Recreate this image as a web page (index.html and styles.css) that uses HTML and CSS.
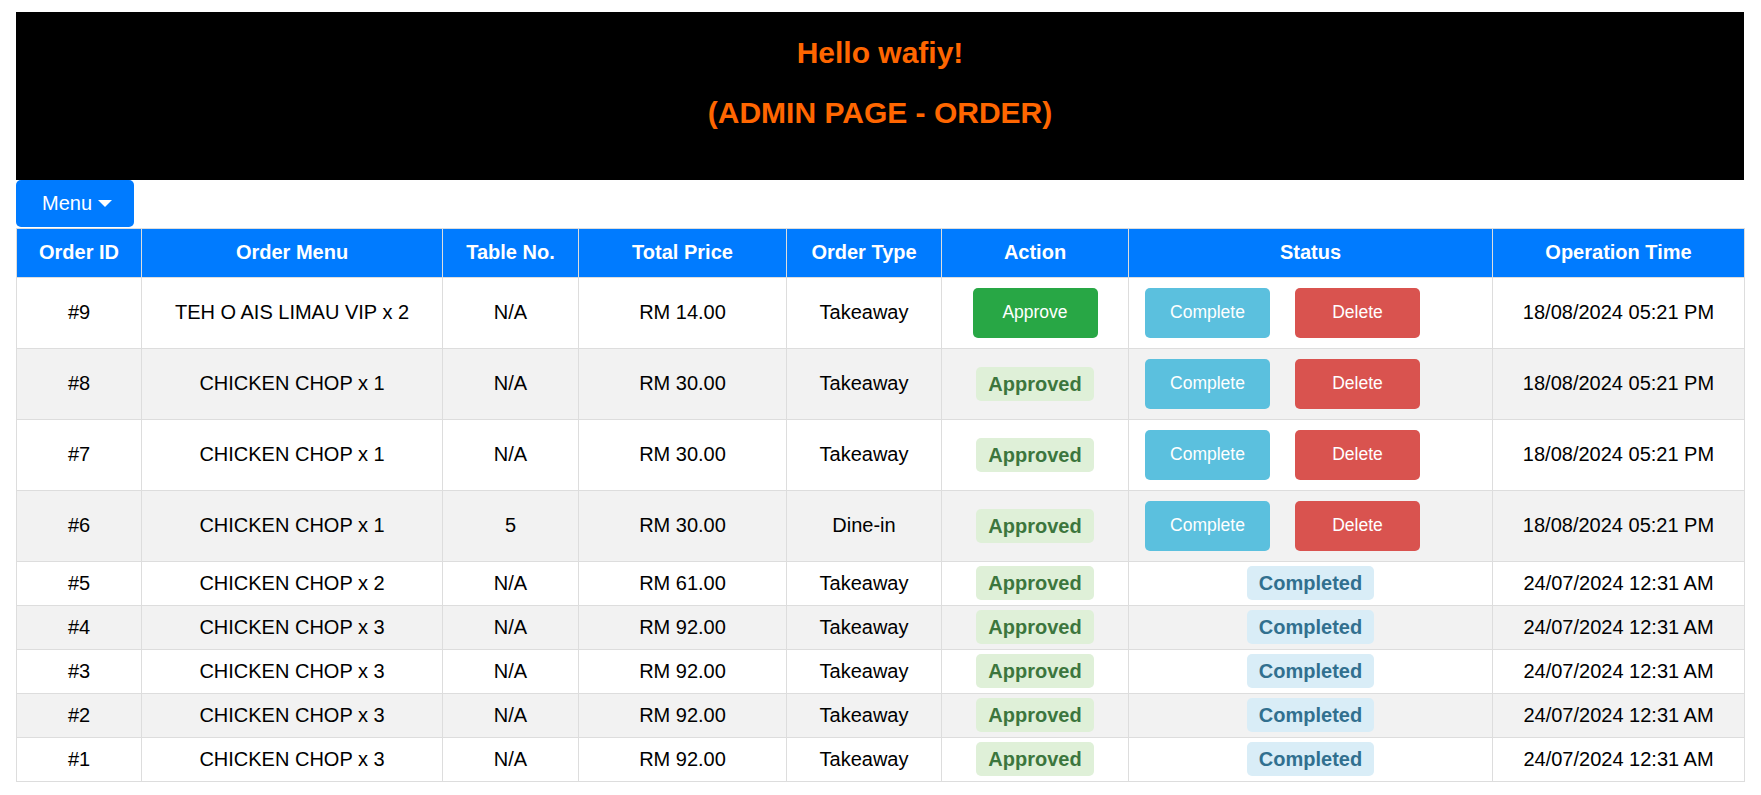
FILE: index.html
```html
<!DOCTYPE html>
<html lang="en">
<head>
<meta charset="utf-8">
<title>Admin Page - Order</title>
<link rel="stylesheet" href="styles.css">
</head>
<body>
<div class="page">
  <header class="banner">
    <div class="banner-line">Hello wafiy!</div>
    <div class="banner-line">(ADMIN PAGE - ORDER)</div>
  </header>
  <div class="menu-bar">
    <button class="menu-btn" type="button">Menu<svg class="caret" width="14" height="7" viewBox="0 0 14 7"><path d="M0 0 H14 L7 7 Z" fill="#fff"/></svg></button>
  </div>
  <table class="orders">
    <colgroup>
      <col class="c1"><col class="c2"><col class="c3"><col class="c4"><col class="c5"><col class="c6"><col class="c7"><col class="c8">
    </colgroup>
    <thead>
      <tr class="head-row">
        <th>Order ID</th><th>Order Menu</th><th>Table No.</th><th>Total Price</th><th>Order Type</th><th>Action</th><th>Status</th><th>Operation Time</th>
      </tr>
    </thead>
    <tbody>
      <tr class="big">
        <td>#9</td><td>TEH O AIS LIMAU VIP x 2</td><td>N/A</td><td>RM 14.00</td><td>Takeaway</td>
        <td><button class="btn btn-approve" type="button">Approve</button></td>
        <td class="status-cell"><div class="btn-group"><button class="btn btn-complete" type="button">Complete</button><button class="btn btn-delete" type="button">Delete</button></div></td>
        <td>18/08/2024 05:21 PM</td>
      </tr>
      <tr class="big">
        <td>#8</td><td>CHICKEN CHOP x 1</td><td>N/A</td><td>RM 30.00</td><td>Takeaway</td>
        <td><span class="badge badge-approved">Approved</span></td>
        <td class="status-cell"><div class="btn-group"><button class="btn btn-complete" type="button">Complete</button><button class="btn btn-delete" type="button">Delete</button></div></td>
        <td>18/08/2024 05:21 PM</td>
      </tr>
      <tr class="big">
        <td>#7</td><td>CHICKEN CHOP x 1</td><td>N/A</td><td>RM 30.00</td><td>Takeaway</td>
        <td><span class="badge badge-approved">Approved</span></td>
        <td class="status-cell"><div class="btn-group"><button class="btn btn-complete" type="button">Complete</button><button class="btn btn-delete" type="button">Delete</button></div></td>
        <td>18/08/2024 05:21 PM</td>
      </tr>
      <tr class="big">
        <td>#6</td><td>CHICKEN CHOP x 1</td><td>5</td><td>RM 30.00</td><td>Dine-in</td>
        <td><span class="badge badge-approved">Approved</span></td>
        <td class="status-cell"><div class="btn-group"><button class="btn btn-complete" type="button">Complete</button><button class="btn btn-delete" type="button">Delete</button></div></td>
        <td>18/08/2024 05:21 PM</td>
      </tr>
      <tr class="small">
        <td>#5</td><td>CHICKEN CHOP x 2</td><td>N/A</td><td>RM 61.00</td><td>Takeaway</td>
        <td><span class="badge badge-approved">Approved</span></td>
        <td><span class="badge badge-completed">Completed</span></td>
        <td>24/07/2024 12:31 AM</td>
      </tr>
      <tr class="small">
        <td>#4</td><td>CHICKEN CHOP x 3</td><td>N/A</td><td>RM 92.00</td><td>Takeaway</td>
        <td><span class="badge badge-approved">Approved</span></td>
        <td><span class="badge badge-completed">Completed</span></td>
        <td>24/07/2024 12:31 AM</td>
      </tr>
      <tr class="small">
        <td>#3</td><td>CHICKEN CHOP x 3</td><td>N/A</td><td>RM 92.00</td><td>Takeaway</td>
        <td><span class="badge badge-approved">Approved</span></td>
        <td><span class="badge badge-completed">Completed</span></td>
        <td>24/07/2024 12:31 AM</td>
      </tr>
      <tr class="small">
        <td>#2</td><td>CHICKEN CHOP x 3</td><td>N/A</td><td>RM 92.00</td><td>Takeaway</td>
        <td><span class="badge badge-approved">Approved</span></td>
        <td><span class="badge badge-completed">Completed</span></td>
        <td>24/07/2024 12:31 AM</td>
      </tr>
      <tr class="small">
        <td>#1</td><td>CHICKEN CHOP x 3</td><td>N/A</td><td>RM 92.00</td><td>Takeaway</td>
        <td><span class="badge badge-approved">Approved</span></td>
        <td><span class="badge badge-completed">Completed</span></td>
        <td>24/07/2024 12:31 AM</td>
      </tr>
    </tbody>
  </table>
</div>
</body>
</html>
```
FILE: styles.css
```css
html, body {
  margin: 0;
  padding: 0;
  background: #fff;
}

body {
  font-family: "Liberation Sans", Arial, sans-serif;
  font-size: 20px;
  color: #000;
}

.page {
  padding: 12px 17px 0 16px;
}

.banner {
  background: #000;
  color: #ff6600;
  text-align: center;
  padding: 24px 0 50px;
  display: flex;
  flex-direction: column;
  gap: 26px;
}

.banner-line {
  font-size: 30px;
  font-weight: bold;
  line-height: 34px;
}

.menu-bar {
  height: 48px;
}

.menu-btn {
  display: inline-flex;
  align-items: center;
  height: 47px;
  width: 118px;
  padding: 0 0 1px 26px;
  border: none;
  border-radius: 5px;
  background: #007bff;
  color: #fff;
  font-family: "Liberation Sans", Arial, sans-serif;
  font-size: 20px;
  line-height: 46px;
  box-sizing: border-box;
}

.caret {
  margin-left: 6px;
  margin-top: 1px;
}

.orders {
  width: 1728px;
  border-collapse: collapse;
  table-layout: fixed;
  border: 1px solid #dddddd;
}

.c1 { width: 125px; }
.c2 { width: 301px; }
.c3 { width: 136px; }
.c4 { width: 208px; }
.c5 { width: 155px; }
.c6 { width: 187px; }
.c7 { width: 364px; }
.c8 { width: 252px; }

.orders th,
.orders td {
  border: 1px solid #dddddd;
  padding: 0 0 1px;
  text-align: center;
  vertical-align: middle;
  line-height: 23px;
}

.orders th {
  background: #007bff;
  color: #fff;
  font-weight: bold;
}

.head-row { height: 49px; }
.big { height: 71px; }
.small { height: 44px; }

.orders tbody tr:nth-child(even) {
  background: #f2f2f2;
}

.btn {
  width: 125px;
  height: 50px;
  border: none;
  border-radius: 5px;
  color: #fff;
  font-family: "Liberation Sans", Arial, sans-serif;
  font-size: 17.5px;
  padding: 0;
  vertical-align: middle;
}

.btn-approve { background: #28a745; }
.btn-complete { background: #5bc0de; }
.btn-delete { background: #d9534f; }

.btn-group {
  display: flex;
  gap: 25px;
  padding-left: 16px;
}

.badge {
  display: inline-block;
  padding: 5px 12px;
  line-height: 24px;
  border-radius: 5px;
  font-weight: bold;
  vertical-align: middle;
}

.badge-approved {
  background: #dff0d8;
  color: #3c763d;
}

.badge-completed {
  background: #d9edf7;
  color: #31708f;
}
```
